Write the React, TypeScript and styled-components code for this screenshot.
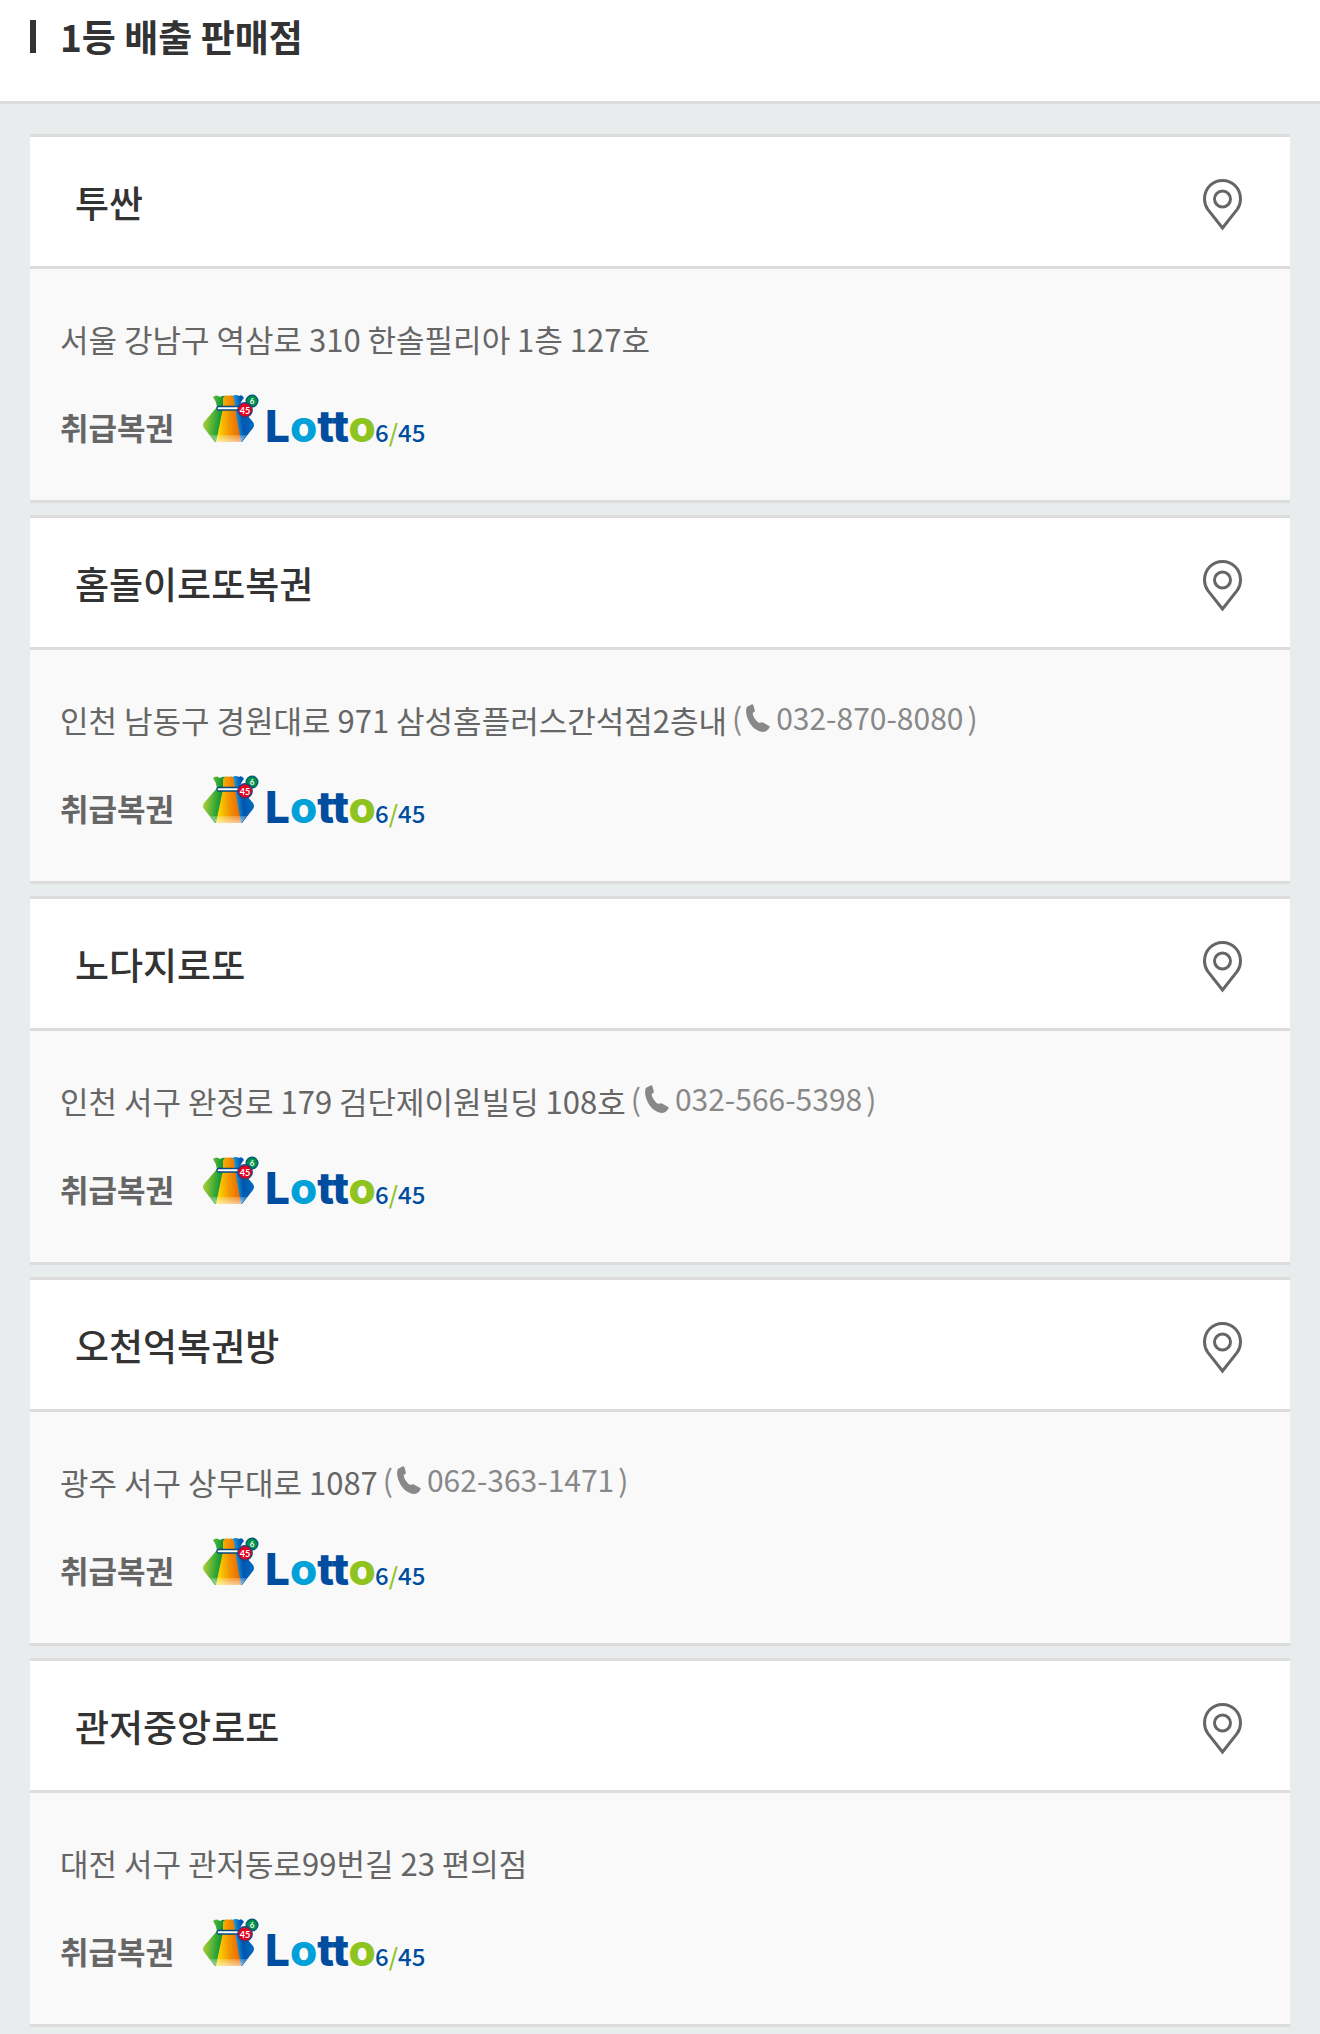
import React from "react";
import styled, { createGlobalStyle } from "styled-components";

const GlobalStyle = createGlobalStyle`
  *, *::before, *::after { box-sizing: border-box; }
  body {
    margin: 0;
    background: #e8eced;
    color: #333;
    font-family: "Noto Sans CJK KR", "Noto Sans", sans-serif;
  }
  h1, h2, p, ul { margin: 0; padding: 0; }
`;

const PageHeader = styled.header`
  padding: 9px 30px 38px;
  background: #fff;
  border-bottom: 3px solid #dcdcdc;
`;

const PageTitle = styled.h1`
  display: flex;
  align-items: center;
  gap: 24px;
  font-size: 37px;
  line-height: 54px;
  font-weight: 700;

  &::before {
    content: "";
    width: 6px;
    height: 33px;
    background: #333;
  }
`;

const StoreList = styled.ul`
  display: flex;
  flex-direction: column;
  gap: 12px;
  padding: 30px 30px 7px;
  list-style: none;
`;

const StoreCard = styled.li`
  border-top: 3px solid #dcdcdc;
  border-bottom: 3px solid #dcdcdc;
  background: #f9f9f9;
`;

const StoreHead = styled.div`
  display: flex;
  align-items: center;
  justify-content: space-between;
  padding: 36px 48px 35px 45px;
  background: #fff;
  border-bottom: 3px solid #dcdcdc;
`;

const StoreName = styled.h2`
  font-size: 37px;
  line-height: 54px;
  font-weight: 500;
`;

const MapButton = styled.button`
  display: flex;
  padding: 6px 0 0;
  border: 0;
  background: none;
  cursor: pointer;
`;

const StoreBody = styled.div`
  display: flex;
  flex-direction: column;
  gap: 29px;
  padding: 46px 30px 38px;
`;

const Address = styled.div`
  display: flex;
  flex-wrap: wrap;
  align-items: flex-start;
  column-gap: 5px;
  color: #666;
  font-size: 31px;
  line-height: 48px;
`;

const Phone = styled.span`
  display: flex;
  align-items: center;
  gap: 4px;
  color: #888;
  font-size: 30px;
  line-height: 43px;
`;

const PhoneLink = styled.a`
  display: flex;
  align-items: center;
  gap: 6px;
  color: inherit;
  text-decoration: none;
`;

const LotteryRow = styled.div`
  display: flex;
  gap: 29px;
`;

const LotteryLabel = styled.span`
  color: #666;
  font-size: 31px;
  line-height: 70px;
  font-weight: 700;
`;

const PinIcon = () => (
  <svg width="39" height="52" viewBox="0 0 39 52" fill="none" stroke="#666" strokeWidth="3" aria-hidden="true">
    <path d="M19.5 49 L4.8 30.4 C2.6 27.3 1.5 24 1.5 20 C1.5 9.5 9.5 1.5 19.5 1.5 S37.5 9.5 37.5 20 C37.5 24 36.4 27.3 34.2 30.4 Z" />
    <circle cx="19.5" cy="20" r="8" />
  </svg>
);

const PhoneIcon = () => (
  <svg width="24" height="28" viewBox="0 0 24 28" fill="#888" aria-hidden="true">
    <path d="M1.5 2.4 L6 0.2 Q7 0 7.3 0.9 L8.9 6.4 Q9.1 7.2 8.4 7.8 L6.6 9.3 Q7.4 14.5 12.6 18.8 L15.6 18.4 Q16.4 18.2 17 18.5 L23.2 22 Q24 22.6 23.6 23.3 Q21.5 28 16.2 28 Q9 27 4 19.5 Q-1 11 0.4 4.3 Q0.7 2.9 1.5 2.4 Z" />
  </svg>
);

const LottoLogo = ({ id }: { id: string }) => (
  <svg width="240" height="70" viewBox="0 -1 240 70" role="img" aria-label="Lotto 6/45">
    <defs>
      <linearGradient id={`${id}-green`} x1="0" y1="0.3" x2="1" y2="0.5">
        <stop offset="0" stopColor="#bdd338" />
        <stop offset="0.5" stopColor="#4aaf36" />
        <stop offset="0.85" stopColor="#00913c" />
      </linearGradient>
      <linearGradient id={`${id}-orange`} x1="0" y1="0.6" x2="1" y2="0.5">
        <stop offset="0" stopColor="#ffe100" />
        <stop offset="0.5" stopColor="#f39800" />
        <stop offset="1" stopColor="#ea6000" />
      </linearGradient>
      <linearGradient id={`${id}-blue`} x1="0" y1="0.6" x2="1" y2="0.4">
        <stop offset="0.1" stopColor="#27b8f0" />
        <stop offset="0.5" stopColor="#0055b0" />
        <stop offset="1" stopColor="#0070bf" />
      </linearGradient>
      <linearGradient id={`${id}-shine`} x1="0" y1="0" x2="0" y2="1">
        <stop offset="0" stopColor="#fff" stopOpacity="0.2" />
        <stop offset="1" stopColor="#fff" stopOpacity="0.6" />
      </linearGradient>
    </defs>
    <path d="M10 4 Q13 1 17 4 Q20 2 23 3 L22 16 L14 49 L12 49 L1 35 Q-1 32 1 29 L14 14 Q13 8 10 4 Z" fill={`url(#${id}-green)`} />
    <path d="M29 3 Q33 1 36 3 Q39 1 41 5 Q37 9 37 14 L50 29 Q52 32 50 35 L39 49 L34 49 L28 16 Z" fill={`url(#${id}-blue)`} />
    <path d="M20 5 Q23 1 26 3 Q29 1 31 5 L32 15 L38 49 L13 49 L20 15 Z" fill={`url(#${id}-orange)`} />
    <path d="M7 42 H44 L38 49 H13 Z" fill={`url(#${id}-shine)`} />
    <rect x="14" y="13.5" width="24" height="3.5" rx="1.5" fill="#fff" stroke="#004b80" strokeWidth="1.3" />
    <circle cx="49" cy="8" r="5.8" fill="#009246" stroke="#005b75" strokeWidth="1.4" />
    <circle cx="42" cy="17" r="7.2" fill="#e60020" stroke="#29427c" strokeWidth="1.4" />
    <g fill="#fff" fontFamily="Lato, sans-serif" fontWeight="700" textAnchor="middle">
      <text x="49" y="11" fontSize="8">6</text>
      <text x="42" y="20.5" fontSize="9">45</text>
    </g>
    <text x="62" y="49" fontFamily="Inter, sans-serif" fontWeight="800" fontSize="44" fill="#004da0">
      L<tspan fill="#00a0d8">o</tspan>tt<tspan fill="#8fc31f">o</tspan>
    </text>
    <text x="172" y="49" fontFamily="Noto Sans CJK KR, sans-serif" fontWeight="500" fontSize="24" fill="#004da0">
      6<tspan fill="#8fc31f">/</tspan>45
    </text>
  </svg>
);

type Store = { name: string; address: string; phone?: string };

const stores: Store[] = [
  { name: "투싼", address: "서울 강남구 역삼로 310 한솔필리아 1층 127호" },
  { name: "홈돌이로또복권", address: "인천 남동구 경원대로 971 삼성홈플러스간석점2층내", phone: "032-870-8080" },
  { name: "노다지로또", address: "인천 서구 완정로 179 검단제이원빌딩 108호", phone: "032-566-5398" },
  { name: "오천억복권방", address: "광주 서구 상무대로 1087", phone: "062-363-1471" },
  { name: "관저중앙로또", address: "대전 서구 관저동로99번길 23 편의점" },
];

export default function App() {
  return (
    <>
      <GlobalStyle />
      <PageHeader>
        <PageTitle>1등 배출 판매점</PageTitle>
      </PageHeader>
      <main>
        <StoreList>
          {stores.map((store, index) => (
            <StoreCard key={store.name}>
              <StoreHead>
                <StoreName>{store.name}</StoreName>
                <MapButton type="button" aria-label={`${store.name} 지도 보기`}>
                  <PinIcon />
                </MapButton>
              </StoreHead>
              <StoreBody>
                <Address>
                  <span>{store.address}</span>
                  {store.phone && (
                    <Phone>
                      <span>(</span>
                      <PhoneLink href={`tel:${store.phone}`}>
                        <PhoneIcon />
                        {store.phone}
                      </PhoneLink>
                      <span>)</span>
                    </Phone>
                  )}
                </Address>
                <LotteryRow>
                  <LotteryLabel>취급복권</LotteryLabel>
                  <LottoLogo id={`lotto-${index}`} />
                </LotteryRow>
              </StoreBody>
            </StoreCard>
          ))}
        </StoreList>
      </main>
    </>
  );
}
